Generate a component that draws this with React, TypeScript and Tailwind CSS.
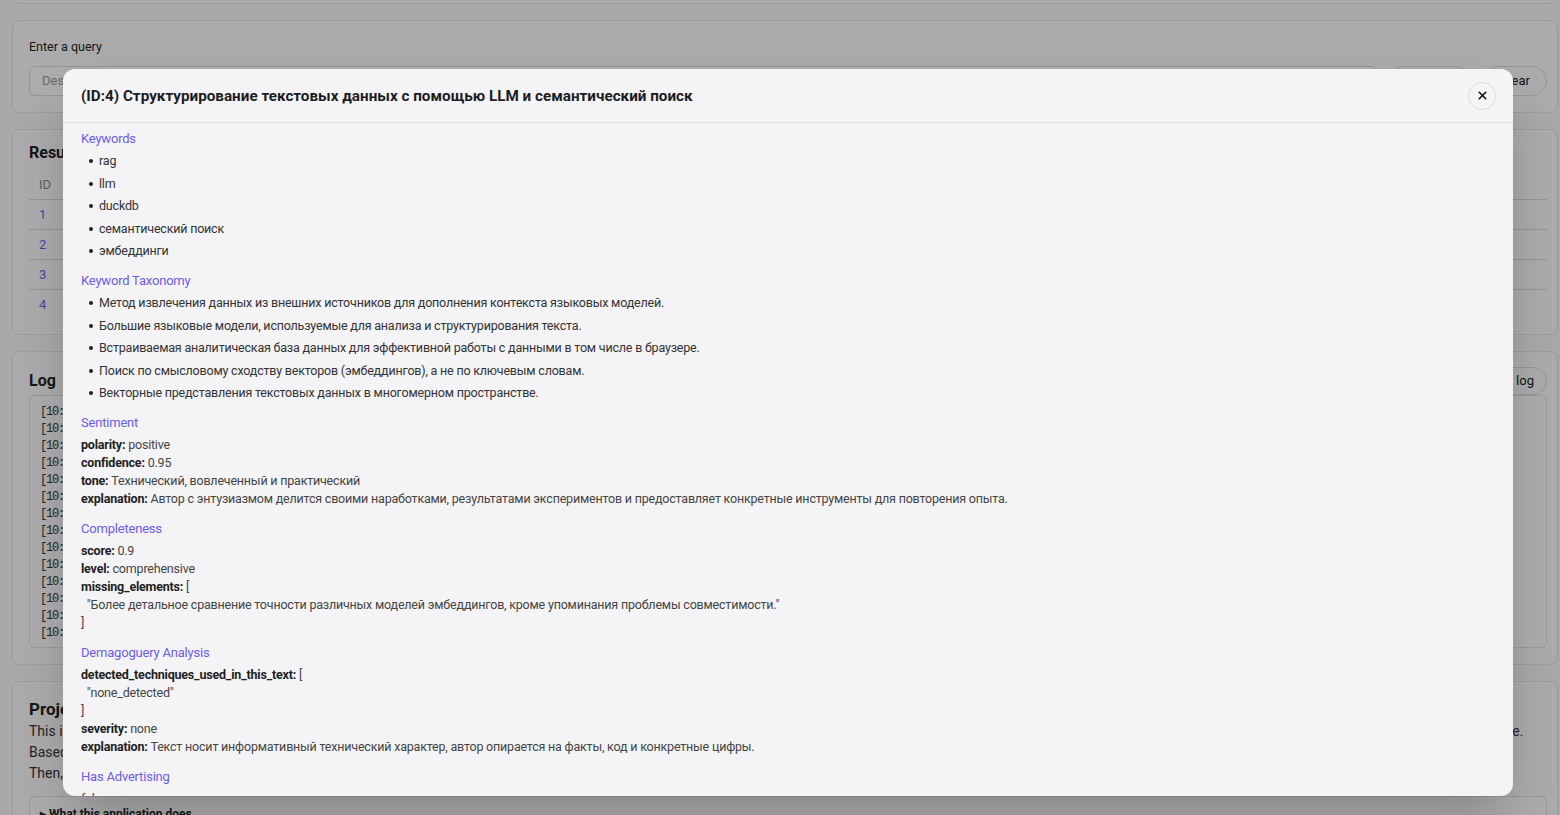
import { X } from "lucide-react";

const keywords = ["rag", "llm", "duckdb", "семантический поиск", "эмбеддинги"];

const taxonomy = [
  "Метод извлечения данных из внешних источников для дополнения контекста языковых моделей.",
  "Большие языковые модели, используемые для анализа и структурирования текста.",
  "Встраиваемая аналитическая база данных для эффективной работы с данными в том числе в браузере.",
  "Поиск по смысловому сходству векторов (эмбеддингов), а не по ключевым словам.",
  "Векторные представления текстовых данных в многомерном пространстве.",
];

const logLines = [
  "[10:41:02] Initializing DuckDB-WASM...",
  "[10:41:03] Database ready",
  "[10:41:03] Loading embedding model...",
  "[10:41:06] Model loaded",
  "[10:41:06] Fetching articles.json",
  "[10:41:07] Parsed 4 documents",
  "[10:41:07] Creating table documents",
  "[10:41:08] Inserted 4 rows",
  "[10:41:08] Computing embeddings (4)",
  "[10:41:12] Embeddings stored",
  "[10:41:12] Creating HNSW index",
  "[10:41:13] Index ready",
  "[10:41:20] Query: \"llm\"",
  "[10:41:21] 4 results in 38 ms",
];

const rows = [
  { id: 1, title: "Как мы перевели поиск на векторную базу" },
  { id: 2, title: "Локальные LLM для обработки документов" },
  { id: 3, title: "DuckDB в браузере: опыт использования" },
  { id: 4, title: "Структурирование текстовых данных с помощью LLM и семантический поиск" },
];

function Card({ children, className = "" }: { children: React.ReactNode; className?: string }) {
  return (
    <div className={`overflow-hidden rounded-lg border border-[#dedee3] bg-[#f5f5f8] pl-4 pr-[10px] ${className}`}>
      {children}
    </div>
  );
}

function Section({ title, children }: { title: string; children: React.ReactNode }) {
  return (
    <div className="flex flex-col gap-1">
      <h3 className="text-[13px] leading-[18px] text-[#6c5ce7]">{title}</h3>
      {children}
    </div>
  );
}

function Field({ name, children }: { name: string; children?: React.ReactNode }) {
  return (
    <div className="leading-[18px]">
      <span className="font-bold text-[#222]">{name}:</span> <span className="text-[#444]">{children}</span>
    </div>
  );
}

function Bullets({ items }: { items: string[] }) {
  return (
    <ul className="flex flex-col gap-[4.5px] pl-[8px]">
      {items.map((t) => (
        <li key={t} className="flex items-center leading-[18px] text-[#333]">
          <span className="mr-[6px] h-[4px] w-[4px] shrink-0 rounded-full bg-[#222]" />
          {t}
        </li>
      ))}
    </ul>
  );
}

export default function App() {
  return (
    <div
      className="relative h-[815px] overflow-hidden bg-[#f1f1f4] text-[#222]"
      style={{ fontFamily: "Roboto, 'Noto Sans', sans-serif" }}
    >
      {/* page, scrolled a little */}
      <div className="-mt-[40px] ml-3 mr-[2px] flex flex-col gap-4">
        <Card className="h-[44px]">
          <span />
        </Card>

        <Card className="py-4">
          <div className="text-[12.5px] leading-5 mb-[9px]">Enter a query</div>
          <div className="flex gap-3 items-center">
            <div className="flex-1 h-[30px] rounded-md border border-[#d6d6dc] bg-[#f8f8fa] px-3 flex items-center text-[13px] text-[#999]">
              Describe what you are looking for...
            </div>
            <button className="h-[30px] px-5 rounded-full border border-[#d6d6dc] text-[13px]">Search</button>
            <button className="h-[30px] px-4 rounded-full border border-[#d6d6dc] text-[13px]">Clear</button>
          </div>
        </Card>

        <Card className="pt-[14px] pb-[14px]">
          <div className="text-base font-bold leading-[18px] mb-2">Results</div>
          <div className="text-[13px]">
            <div className="flex h-[30px] items-center border-b border-[#d2d2d8] text-[#888]">
              <div className="w-[70px] pl-[10px]">ID</div>
              <div className="flex-1">Title</div>
              <div className="w-[120px]">Score</div>
            </div>
            {rows.map((r, i) => (
              <div
                key={r.id}
                className={`flex h-[30px] items-center ${i < rows.length - 1 ? "border-b border-[#d2d2d8]" : ""}`}
              >
                <div className="w-[70px] pl-[10px] text-[#6c5ce7]">{r.id}</div>
                <div className="flex-1">{r.title}</div>
                <div className="w-[120px] text-[#666]">0.{90 - i * 7}</div>
              </div>
            ))}
          </div>
        </Card>

        <Card className="pt-[15px] pb-4">
          <div className="flex h-[28px] items-center justify-between">
            <span className="text-base font-bold">Log</span>
            <button className="h-[28px] px-3 rounded-full border border-[#d6d6dc] text-[13px]">Clear log</button>
          </div>
          <pre
            className="rounded-md border border-[#dcdce2] bg-[#f7f7f9] px-[10px] pt-2 pb-[5px] text-[12px] leading-[17px] tracking-[-1.2px] text-[#333]"
            style={{ fontFamily: "'Liberation Mono', monospace" }}
          >
            {logLines.join("\n")}
          </pre>
        </Card>

        <Card className="pt-[15px] pb-6">
          <div className="text-[17px] font-bold leading-6">Project</div>
          <div className="text-[14px] leading-[21px] text-[#333] whitespace-nowrap">
            <p>
              This is an experimental app that structures text data with LLMs and lets you search it semantically with DuckDB running entirely in your browser: articles, analyses and embeddings are all kept locally on your own computer for your private use.
            </p>
            <p>Based on embeddings computed locally, each article is turned into a vector and stored next to its structured analysis.</p>
            <p>Then, queries are matched against these vectors to return the closest documents.</p>
          </div>
          <div className="mt-3 rounded-md border border-[#dcdce2] px-[10px] py-2 text-[12px] font-bold">
            ▸ What this application does
          </div>
        </Card>
      </div>

      {/* backdrop */}
      <div className="absolute inset-0 bg-black/30" />

      {/* details dialog */}
      <div className="absolute left-[63px] top-[69px] w-[1450px] h-[727px] rounded-xl bg-[#f4f4f7] shadow-2xl flex flex-col overflow-hidden">
        <div className="flex h-[54px] shrink-0 items-center justify-between border-b border-[#dcdce0] pl-[18px] pr-[17px]">
          <h2 className="pt-px text-[15.25px] font-bold text-[#1d1d1f]">
            (ID:4) Структурирование текстовых данных с помощью LLM и семантический поиск
          </h2>
          <button className="flex h-7 w-7 items-center justify-center rounded-full border border-[#dcdce0] text-[#111]">
            <X size={13} strokeWidth={3} />
          </button>
        </div>

        <div className="flex-1 overflow-hidden pl-[18px] pr-6 pt-[7px] text-[12.5px] tracking-[-0.2px] text-[#333]">
          <div className="flex flex-col gap-3">
            <Section title="Keywords">
              <Bullets items={keywords} />
            </Section>

            <Section title="Keyword Taxonomy">
              <Bullets items={taxonomy} />
            </Section>

            <Section title="Sentiment">
              <div>
                <Field name="polarity">positive</Field>
                <Field name="confidence">0.95</Field>
                <Field name="tone">Технический, вовлеченный и практический</Field>
                <Field name="explanation">
                  Автор с энтузиазмом делится своими наработками, результатами экспериментов и предоставляет конкретные инструменты для повторения опыта.
                </Field>
              </div>
            </Section>

            <Section title="Completeness">
              <div>
                <Field name="score">0.9</Field>
                <Field name="level">comprehensive</Field>
                <Field name="missing_elements">[</Field>
                <div className="leading-[18px] whitespace-pre text-[#444]">
                  {'  "Более детальное сравнение точности различных моделей эмбеддингов, кроме упоминания проблемы совместимости."'}
                </div>
                <div className="leading-[18px] text-[#444]">]</div>
              </div>
            </Section>

            <Section title="Demagoguery Analysis">
              <div>
                <Field name="detected_techniques_used_in_this_text">[</Field>
                <div className="leading-[18px] whitespace-pre text-[#444]">{'  "none_detected"'}</div>
                <div className="leading-[18px] text-[#444]">]</div>
                <Field name="severity">none</Field>
                <Field name="explanation">
                  Текст носит информативный технический характер, автор опирается на факты, код и конкретные цифры.
                </Field>
              </div>
            </Section>

            <Section title="Has Advertising">
              <div className="leading-[18px] text-[#444]">false</div>
            </Section>
          </div>
        </div>
      </div>
    </div>
  );
}
